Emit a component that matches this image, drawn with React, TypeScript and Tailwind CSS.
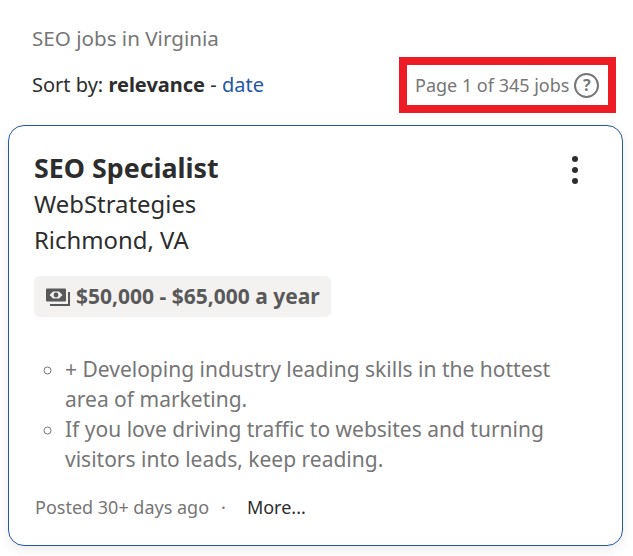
const font = "font-['Noto_Sans',sans-serif]";

function MoneyIcon() {
  return (
    <svg width="26" height="20" viewBox="0 0 26 20" fill="none" className="shrink-0">
      <rect x="0" y="1.5" width="20" height="13" rx="1" fill="#595959" />
      <path d="M3.5 8L7 4.5H13L16.5 8L13 11.5H7Z" fill="#f3f2f1" />
      <circle cx="10" cy="8" r="2.4" fill="#595959" />
      <path d="M23 5V18H4" stroke="#595959" strokeWidth="2" />
    </svg>
  );
}

export default function App() {
  return (
    <main className={`${font} w-[633px] h-[556px] overflow-hidden bg-white pt-[24px] px-[8px]`}>
      <h1 className="ml-[24px] text-[20.6px] leading-[28px] text-[#767676]">SEO jobs in Virginia</h1>

      <div className="flex items-center justify-between mt-[5px] pl-[24px] pr-[9px]">
        <p className="text-[20px] leading-[28px] text-[#2d2d2d]">
          Sort by: <strong className="font-bold">relevance</strong> - <a className="text-[#2557a7]">date</a>
        </p>
        <div className="flex items-center gap-[5px] w-[217px] h-[56px] border-[8px] border-[#ed1c24] pl-[8px]">
          <span className="text-[18px] text-[#767676]">Page 1 of 345 jobs</span>
          <span className="flex items-center justify-center w-[25px] h-[25px] rounded-full border-2 border-[#767676] text-[16px] font-bold text-[#767676]">?</span>
        </div>
      </div>

      <article className="mt-[12px] h-[421px] w-[615px] rounded-[16px] border border-[#2557a7] bg-white shadow-[0_4px_12px_rgba(0,0,0,0.08)] pt-[24px] pl-[25px] pr-[24px]">
        <div className="flex justify-between">
          <h2 className="text-[26.8px] leading-[36px] font-bold text-[#2d2d2d]">SEO Specialist</h2>
          <div className="flex flex-col gap-[5px] mt-[6px] mr-[20px]">
            <span className="w-[6px] h-[6px] rounded-full bg-[#2d2d2d]" />
            <span className="w-[6px] h-[6px] rounded-full bg-[#2d2d2d]" />
            <span className="w-[6px] h-[6px] rounded-full bg-[#2d2d2d]" />
          </div>
        </div>
        <p className="text-[23.9px] leading-[36px] text-[#2d2d2d]">WebStrategies</p>
        <p className="text-[23.9px] leading-[36px] text-[#2d2d2d]">Richmond, VA</p>

        <div className="mt-[18px] inline-flex items-center gap-[4px] h-[41px] rounded-[6px] bg-[#f3f2f1] pl-[12px] pr-[11px]">
          <MoneyIcon />
          <span className="text-[21px] font-bold text-[#595959]">$50,000 - $65,000 a year</span>
        </div>

        <ul className="mt-[37px] list-[circle] pl-[31px] text-[21px] leading-[30px] text-[#767676]">
          <li>+ Developing industry leading skills in the hottest area of marketing.</li>
          <li>If you love driving traffic to websites and turning visitors into leads, keep reading.</li>
        </ul>

        <div className="mt-[21px] ml-[1px] flex items-center text-[18px] leading-[24px]">
          <span className="text-[#767676]">Posted 30+ days ago</span>
          <span className="ml-[12px] text-[#767676]">·</span>
          <a className="ml-[21px] text-[#2d2d2d]">More...</a>
        </div>
      </article>
    </main>
  );
}
